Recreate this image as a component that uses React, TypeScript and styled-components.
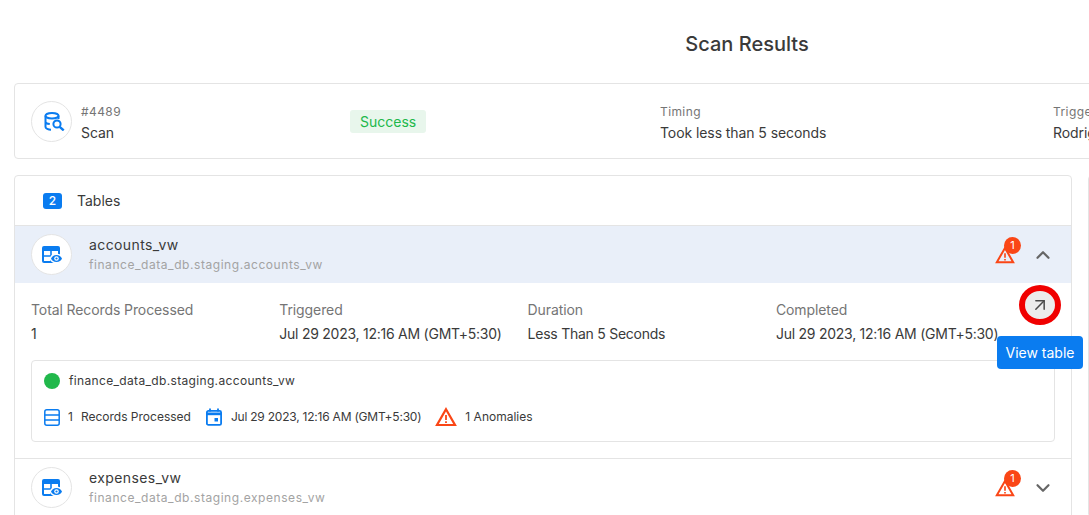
import React from 'react'
import styled, { createGlobalStyle } from 'styled-components'
import { ArrowUpRight, ChevronDown, ChevronUp } from 'lucide-react'

const GlobalStyle = createGlobalStyle`
  html, body {
    margin: 0;
    padding: 0;
    background: #fff;
    overflow: hidden;
  }
  body {
    font-family: Inter, "Noto Sans", sans-serif;
    color: #3a3a3a;
  }
`

const Page = styled.div`
  width: 1089px;
  height: 515px;
  overflow: hidden;
  padding-left: 14px;
  box-sizing: border-box;
`

const Title = styled.h1`
  margin: 0;
  width: 1466px;
  height: 83px;
  display: flex;
  align-items: center;
  justify-content: center;
  padding-top: 5px;
  box-sizing: border-box;
  font-size: 20px;
  line-height: 24px;
  font-weight: 500;
  color: #3a3a3a;
`

const SummaryCard = styled.section`
  width: 1300px;
  height: 76px;
  box-sizing: border-box;
  border: 1px solid #e4e4e4;
  border-radius: 4px;
  display: grid;
  grid-template-columns: 319px 310px 393px 1fr;
  align-items: center;
  padding-left: 16px;
  margin-bottom: 16px;
`

const Identity = styled.div`
  display: flex;
  align-items: center;
  gap: 9px;
`

const IconCircle = styled.div`
  width: 41px;
  height: 41px;
  flex: none;
  box-sizing: border-box;
  border-radius: 50%;
  border: 1px solid #e4e4e4;
  background: #fff;
  display: flex;
  align-items: center;
  justify-content: center;
`

const Stack = styled.div`
  display: flex;
  flex-direction: column;
  gap: 3px;
  margin-top: 4px;
`

const Caption = styled.span`
  font-size: 12px;
  line-height: 17px;
  color: #757575;
  letter-spacing: 0.4px;
  white-space: nowrap;
`

const Value = styled.span`
  font-size: 14px;
  line-height: 20px;
  color: #3a3a3a;
  letter-spacing: -0.08px;
  white-space: nowrap;
`

const StatusPill = styled.span`
  justify-self: start;
  background: #e8f6ec;
  color: #21b84b;
  font-size: 14px;
  line-height: 23px;
  padding: 0 10px;
  border-radius: 3px;
  margin-top: 1px;
`

const Columns = styled.div`
  display: flex;
  align-items: flex-start;
  gap: 16px;
  width: 1300px;
`

const TablesCard = styled.section`
  width: 1058px;
  flex: none;
  box-sizing: border-box;
  border: 1px solid #e4e4e4;
  border-radius: 4px 4px 0 0;
  position: relative;
`

const SidePanel = styled.aside`
  width: 226px;
  height: 340px;
  flex: none;
  box-sizing: border-box;
  border: 1px solid #e4e4e4;
  border-radius: 4px 4px 0 0;
`

const TablesHeader = styled.header`
  height: 49px;
  display: flex;
  align-items: center;
  padding-left: 28px;
  gap: 15px;
  font-size: 14px;
  color: #3a3a3a;
`

const CountBadge = styled.span`
  width: 19px;
  height: 16px;
  border-radius: 3px;
  background: #0a7cf0;
  color: #fff;
  font-size: 12px;
  font-weight: 500;
  line-height: 16px;
  text-align: center;
`

const Row = styled.div<{ $open?: boolean }>`
  height: 58px;
  box-sizing: border-box;
  display: flex;
  align-items: center;
  padding: 0 17px 0 16px;
  background: ${p => (p.$open ? '#e9eff9' : '#fff')};
  border-top: 1px solid #e4e4e4;
`

const RowTitles = styled.div`
  display: flex;
  flex-direction: column;
  gap: 1px;
  margin-left: 17px;
  padding-bottom: 1px;
  flex: 1;
`

const RowName = styled.span`
  font-size: 14px;
  line-height: 20px;
  letter-spacing: 0.4px;
  color: #3a3a3a;
`

const RowPath = styled.span`
  font-size: 12px;
  line-height: 17px;
  color: #a3a3a3;
  letter-spacing: 0.56px;
`

const AlertWrap = styled.div`
  position: relative;
  width: 20px;
  height: 20px;
  margin-right: 17px;
`

const AlertCount = styled.span`
  position: absolute;
  top: -8px;
  left: 9px;
  width: 17px;
  height: 17px;
  border-radius: 50%;
  background: #fa4616;
  color: #fff;
  font-size: 11px;
  line-height: 17px;
  text-align: center;
`

const Details = styled.div`
  padding: 17px 16px 16px;
`

const Metrics = styled.div`
  display: grid;
  grid-template-columns: 248.3px 248.3px 248.3px 1fr;
  margin-bottom: 16px;
`

const Metric = styled.div`
  display: flex;
  flex-direction: column;
  gap: 4px;
  white-space: nowrap;
`

const MetricLabel = styled.span`
  font-size: 14px;
  line-height: 20px;
  letter-spacing: -0.1px;
  color: #757575;
`

const MetricValue = styled(Value)`
  letter-spacing: -0.25px;
`

const RedRing = styled.span`
  position: absolute;
  left: 1004px;
  top: 109px;
  width: 42px;
  height: 40px;
  box-sizing: border-box;
  border: 6px solid #f00000;
  border-radius: 50%;
`

const OpenButton = styled.button`
  position: absolute;
  left: 1010px;
  top: 115px;
  width: 30px;
  height: 28px;
  padding: 0;
  border: 0;
  border-radius: 50%;
  background: #ececec;
  color: #4a4a4a;
  display: flex;
  align-items: center;
  justify-content: center;
`

const Tip = styled.span`
  position: absolute;
  left: 982px;
  top: 160px;
  width: 86px;
  height: 33px;
  border-radius: 4px;
  background: #0a7cf0;
  color: #fff;
  font-size: 14px;
  line-height: 33px;
  text-align: center;
`

const ResultBox = styled.div`
  height: 82px;
  box-sizing: border-box;
  border: 1px solid #e4e4e4;
  border-radius: 4px;
  padding: 11px 12px;
  display: flex;
  flex-direction: column;
  gap: 16px;
`

const ResultName = styled.div`
  display: flex;
  align-items: center;
  gap: 9px;
  font-size: 12px;
  line-height: 18px;
  letter-spacing: 0.34px;
  color: #3a3a3a;
`

const GreenDot = styled.span`
  width: 16px;
  height: 16px;
  border-radius: 50%;
  background: #21b84b;
`

const ResultMeta = styled.div`
  display: flex;
  align-items: center;
  font-size: 12px;
  line-height: 20px;
  color: #3a3a3a;
  white-space: nowrap;
`

const MetaItem = styled.span<{ $gap: number; $after: number }>`
  display: flex;
  align-items: center;
  gap: ${p => p.$gap}px;
  margin-right: ${p => p.$after}px;
`

const MetaDate = styled.span`
  letter-spacing: -0.22px;
`

const DatabaseSearchIcon = () => (
  <svg width="26" height="19" viewBox="-5 0 26 19" fill="none" stroke="#0a7cf0" strokeWidth="2">
    <ellipse cx="8" cy="3.800" rx="6.500" ry="2.800" />
    <path d="M1.500 3.800V15c0 1.500 2.700 2.700 5.500 2.700M14.500 3.800V7M1.500 9.500c0 1.400 1.800 2.300 4.300 2.600" />
    <circle cx="13" cy="12" r="3.600" />
    <path d="M15.700 14.800l4 3.600" strokeWidth="2.400" />
  </svg>
)

const TableEyeIcon = () => (
  <svg width="23" height="18" viewBox="-2 0 23 18">
    <rect width="18" height="17" rx="2" fill="#0a7cf0" />
    <path fill="#fff" d="M2 5h6.200v4.200H2zM9.800 5H16v4.200H9.800zM2 10.800h6.200V15H2z" />
    <path
      fill="#0a7cf0"
      stroke="#fff"
      strokeWidth="1.500"
      d="M14.500 8.200c2.900 0 5.300 1.800 6.300 4.300-1 2.500-3.400 4.300-6.300 4.300s-5.300-1.800-6.300-4.300c1-2.500 3.400-4.300 6.300-4.300z"
    />
    <circle cx="14.500" cy="12.500" r="2.300" fill="#fff" />
    <circle cx="14.500" cy="12.500" r="1.100" fill="#0a7cf0" />
  </svg>
)

const WarningIcon = ({ size }: { size: number }) => (
  <svg width={size} height={size} viewBox="0 0 22 20" fill="none">
    <path d="M11 2.200 20 18H2L11 2.200z" stroke="#fa4616" strokeWidth="2.200" strokeLinejoin="miter" />
    <path d="M11 8v5M11 14.300v1.700" stroke="#fa4616" strokeWidth="1.800" />
  </svg>
)

const RowsIcon = () => (
  <svg width="16" height="17" viewBox="0 0 16 17" fill="none" stroke="#0a7cf0" strokeWidth="1.500">
    <rect x="0.800" y="0.800" width="14.400" height="15.400" rx="2" />
    <path d="M1 6h14M1 11h14" />
  </svg>
)

const CalendarIcon = () => (
  <svg width="16" height="18" viewBox="0 0 16 18" fill="none">
    <rect x="0.900" y="2.900" width="14.200" height="14" rx="1.500" stroke="#0a7cf0" strokeWidth="1.800" />
    <path d="M0.900 4.500h14.200v2.700H0.900z" fill="#0a7cf0" />
    <path d="M4 0.500v3M12 0.500v3" stroke="#0a7cf0" strokeWidth="1.800" />
    <rect x="8.500" y="10" width="3.500" height="3.500" fill="#0a7cf0" />
  </svg>
)

const TableRow = ({ name, path, open }: { name: string; path: string; open?: boolean }) => (
  <Row $open={open}>
    <IconCircle>
      <TableEyeIcon />
    </IconCircle>
    <RowTitles>
      <RowName>{name}</RowName>
      <RowPath>{path}</RowPath>
    </RowTitles>
    <AlertWrap>
      <WarningIcon size={20} />
      <AlertCount>1</AlertCount>
    </AlertWrap>
    {open ? (
      <ChevronUp size={22} color="#666" strokeWidth={2.4} />
    ) : (
      <ChevronDown size={22} color="#666" strokeWidth={2.4} />
    )}
  </Row>
)

const metrics = [
  { label: 'Total Records Processed', value: '1' },
  { label: 'Triggered', value: 'Jul 29 2023, 12:16 AM (GMT+5:30)' },
  { label: 'Duration', value: 'Less Than 5 Seconds' },
  { label: 'Completed', value: 'Jul 29 2023, 12:16 AM (GMT+5:30)' },
]

export default function App() {
  return (
    <Page>
      <GlobalStyle />
      <Title>Scan Results</Title>
      <SummaryCard>
        <Identity>
          <IconCircle>
            <DatabaseSearchIcon />
          </IconCircle>
          <Stack>
            <Caption>#4489</Caption>
            <Value>Scan</Value>
          </Stack>
        </Identity>
        <StatusPill>Success</StatusPill>
        <Stack>
          <Caption>Timing</Caption>
          <Value>Took less than 5 seconds</Value>
        </Stack>
        <Stack>
          <Caption>Triggered by</Caption>
          <Value>Rodrigo</Value>
        </Stack>
      </SummaryCard>
      <Columns>
        <TablesCard>
          <TablesHeader>
            <CountBadge>2</CountBadge>
            Tables
          </TablesHeader>
          <TableRow name="accounts_vw" path="finance_data_db.staging.accounts_vw" open />
          <Details>
            <Metrics>
              {metrics.map(m => (
                <Metric key={m.label}>
                  <MetricLabel>{m.label}</MetricLabel>
                  <MetricValue>{m.value}</MetricValue>
                </Metric>
              ))}
            </Metrics>
            <ResultBox>
              <ResultName>
                <GreenDot />
                finance_data_db.staging.accounts_vw
              </ResultName>
              <ResultMeta>
                <MetaItem $gap={8} $after={15}>
                  <RowsIcon />
                  <span>1</span>
                  Records Processed
                </MetaItem>
                <MetaItem $gap={9} $after={14}>
                  <CalendarIcon />
                  <MetaDate>Jul 29 2023, 12:16 AM (GMT+5:30)</MetaDate>
                </MetaItem>
                <MetaItem $gap={8} $after={0}>
                  <WarningIcon size={22} />
                  1 Anomalies
                </MetaItem>
              </ResultMeta>
            </ResultBox>
          </Details>
          <TableRow name="expenses_vw" path="finance_data_db.staging.expenses_vw" />
          <OpenButton aria-label="View table">
            <ArrowUpRight size={20} strokeWidth={1.8} />
          </OpenButton>
          <RedRing />
          <Tip>View table</Tip>
        </TablesCard>
        <SidePanel />
      </Columns>
    </Page>
  )
}
